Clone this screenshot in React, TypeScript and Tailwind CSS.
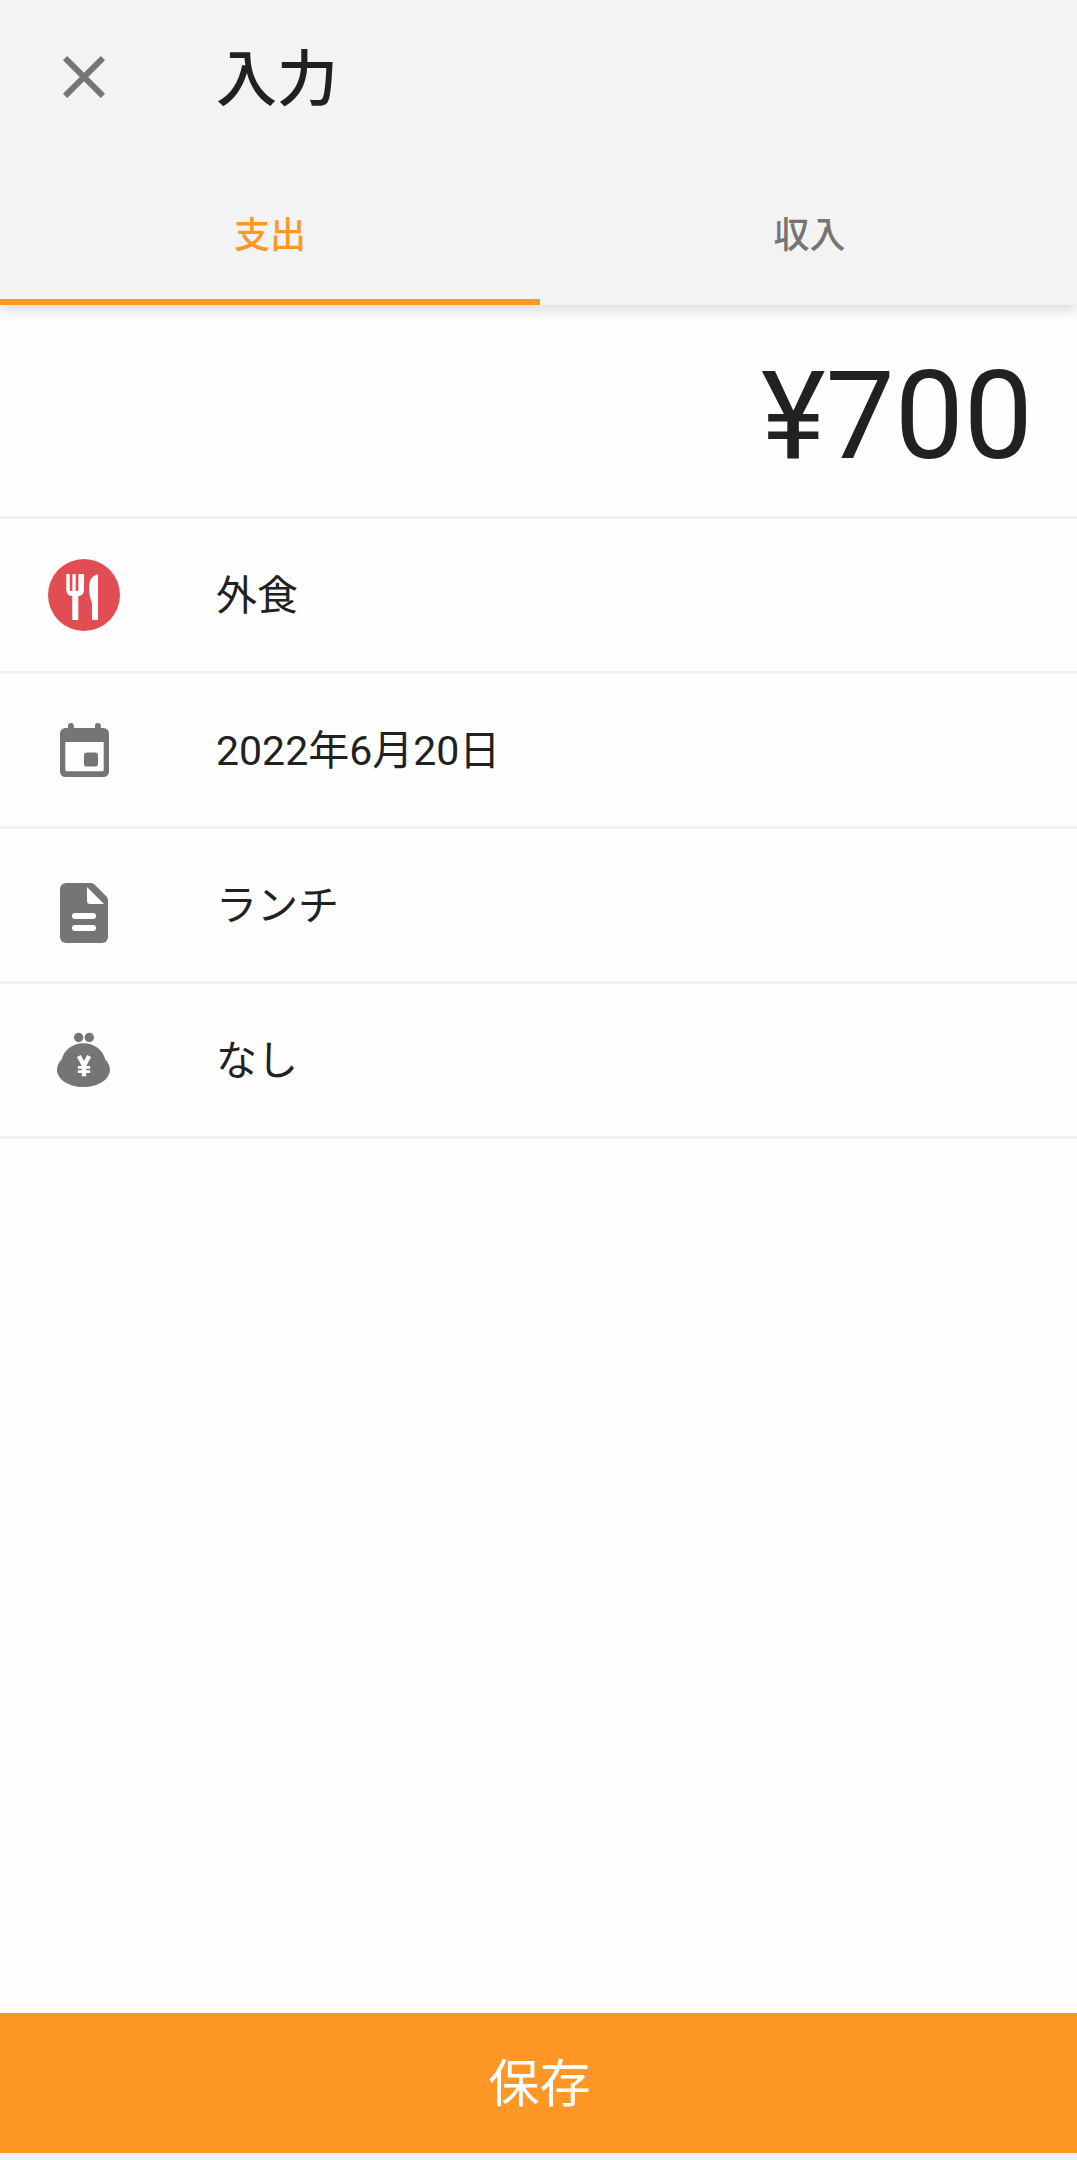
import type { ReactNode } from "react";
import { MdClose } from "react-icons/md";

interface EntryRow {
  label: string;
  icon: ReactNode;
}

const CategoryIcon = () => (
  <svg className="size-[72px]" viewBox="0 0 72 72">
    <circle cx="36" cy="36" r="36" fill="#e14d53" />
    <path
      d="M18.3 15h3.4v15.5q0 1.5 1.5 1.5h1.2V15h3.3v17h1.2q1.5 0 1.5-1.5V15H36v16q0 5.5-5.7 6.3V61h-6V37.3q-6-.8-6-6.3z"
      fill="#fff"
    />
    <path d="M50 15v46h-6V44q-2.9-6-2.9-15Q41.1 17 50 15z" fill="#fff" />
  </svg>
);

const CalendarIcon = () => (
  <svg className="size-[72px]" viewBox="0 0 72 72" fill="#757575">
    <path
      fillRule="evenodd"
      d="M20 14v-2.200a2.900 2.900 0 0 1 5.800 0V14H47v-2.200a2.900 2.900 0 0 1 5.800 0V14h2.700a5.500 5.500 0 0 1 5.500 5.500v38a5.500 5.500 0 0 1-5.500 5.500h-38a5.500 5.500 0 0 1-5.500-5.500v-38a5.500 5.500 0 0 1 5.500-5.500zM17.300 28v28q0 1.300 1.300 1.300h35.800q1.300 0 1.300-1.300V28z"
    />
    <rect x="36" y="38.500" width="14" height="14" rx="2.800" />
  </svg>
);

const MemoIcon = () => (
  <svg className="size-[72px] mt-4" viewBox="0 0 72 72">
    <path
      d="M18 6h25q2 0 3.500 1.500L58.500 19.500Q60 21 60 23.500V60a6 6 0 0 1-6 6H18a6 6 0 0 1-6-6V12a6 6 0 0 1 6-6z"
      fill="#757575"
    />
    <path d="M39 10l17 17H42q-3 0-3-3z" fill="#fff" />
    <rect x="24" y="36" width="24" height="6" rx="3" fill="#fff" />
    <rect x="24" y="48" width="24" height="6" rx="3" fill="#fff" />
  </svg>
);

const PurseIcon = () => (
  <svg className="size-[72px]" viewBox="0 0 72 72">
    <g fill="#757575">
      <circle cx="30.600" cy="13.500" r="4.700" />
      <circle cx="41.300" cy="13.500" r="4.700" />
      <path d="M35.500 19.200c11 0 19.500 6.800 21.600 16 3 3 4.800 6.500 4.800 10.500 0 9.500-11.500 17.300-26.400 17.300S9 55.200 9 45.700c0-4 1.800-7.500 4.800-10.500 2.200-9.200 10.700-16 21.700-16z" />
    </g>
    <path
      d="M30.800 32l5.200 9.500 5.200-9.500M36 40v12.200"
      fill="none"
      stroke="#fff"
      strokeWidth="4.400"
    />
    <path d="M29.800 43.400h12.400M29.800 47.700h12.400" stroke="#fff" strokeWidth="2.800" />
  </svg>
);

const rows: EntryRow[] = [
  { label: "外食", icon: <CategoryIcon /> },
  { label: "2022年6月20日", icon: <CalendarIcon /> },
  { label: "ランチ", icon: <MemoIcon /> },
  { label: "なし", icon: <PurseIcon /> },
];

const App = () => {
  return (
    <div className="w-full h-screen flex flex-col bg-[#fefefe] text-[#212121] font-[Roboto,'Noto_Sans_CJK_JP',sans-serif]">
      {/* HEADER */}
      <header className="relative h-[305px] shrink-0 flex flex-col bg-[#f3f3f3] shadow-[0_6px_12px_rgba(0,0,0,0.13)]">
        <div className="h-[154px] flex items-center px-12 gap-24">
          <button aria-label="閉じる">
            <MdClose className="size-[72px] text-[#757575]" />
          </button>
          <h1 className="pt-[7px] text-[61px] leading-none font-medium">入力</h1>
        </div>
        <div className="flex flex-1 text-[36px] font-medium">
          <button className="w-[540px] pt-[18px] border-b-6 border-[#ff9726] text-[#ff9726]">支出</button>
          <button className="flex-1 pt-[18px] pl-0.5 border-b-6 border-transparent text-[#757575]">収入</button>
        </div>
      </header>
      {/* AMOUNT */}
      <div className="h-[214px] shrink-0 flex items-center justify-end pt-3 pr-11 border-b-3 border-[#f2f2f2]">
        <span className="text-[123px] leading-none">¥700</span>
      </div>
      {/* DETAILS */}
      <ul>
        {rows.map((row) => (
          <li key={row.label} className="h-[155px] flex items-center px-12 gap-24 border-b-3 border-[#f2f2f2]">
            {row.icon}
            <span className="pt-[3px] text-[41px] leading-none">{row.label}</span>
          </li>
        ))}
      </ul>
      {/* SAVE */}
      <footer className="mt-auto pb-[7px] bg-[#f2f2f2]">
        <button className="w-full h-[140px] pt-[5px] pl-0.5 bg-[#ff9726] text-white text-[51px]">保存</button>
      </footer>
    </div>
  );
};
export default App;
